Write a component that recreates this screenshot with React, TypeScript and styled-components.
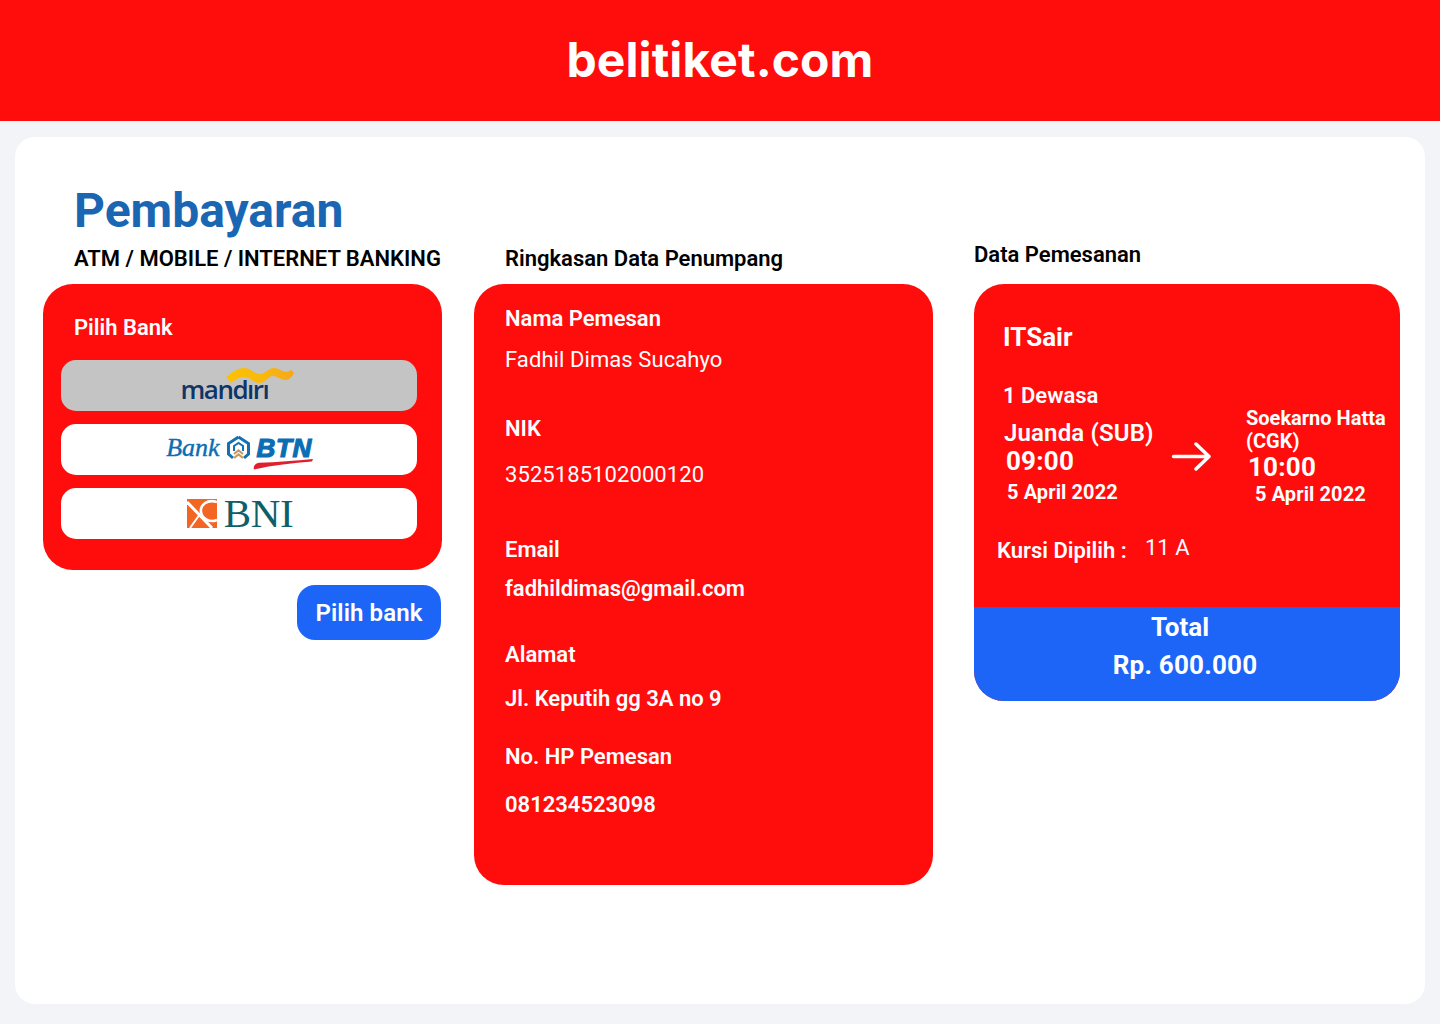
import React from 'react';
import styled, { createGlobalStyle } from 'styled-components';

const GlobalStyle = createGlobalStyle`
  html, body {
    margin: 0;
    padding: 0;
    background: #f2f4f7;
    font-family: Roboto, "Liberation Sans", sans-serif;
  }
  * { box-sizing: border-box; }
`;

const RED = '#ff0d0d';

const Page = styled.div`
  width: 1440px;
  height: 1024px;
  display: flex;
  flex-direction: column;
  overflow: hidden;
`;

const Header = styled.header`
  height: 121px;
  flex: none;
  padding-bottom: 2px;
  background: ${RED};
  display: flex;
  align-items: center;
  justify-content: center;
`;

const Brand = styled.h1`
  margin: 0;
  font-family: Inter, sans-serif;
  font-size: 48px;
  font-weight: 700;
  line-height: 58px;
  letter-spacing: 0.08px;
  color: #fff;
`;

const Sheet = styled.main`
  margin: 16px 15px 20px;
  flex: 1;
  background: #fff;
  border-radius: 20px;
  padding: 44px 25px 0 28px;
`;

const Title = styled.h2`
  margin: 0 0 0 31px;
  font-size: 48px;
  font-weight: 700;
  line-height: 60px;
  color: #1a66b3;
`;

const Columns = styled.div`
  display: grid;
  grid-template-columns: 399px 459px 1fr;
  column-gap: 32px;
  align-items: start;
`;

const Column = styled.section<{ $inset?: number }>`
  display: flex;
  flex-direction: column;
  padding-left: ${(p) => p.$inset ?? 0}px;
`;

const Heading = styled.h3<{ $indent?: number; $up?: number; $below: number }>`
  margin: ${(p) => 4 - (p.$up ?? 0)}px 0 ${(p) => p.$below}px ${(p) => p.$indent ?? 0}px;
  font-size: 22px;
  font-weight: 600;
  line-height: 28px;
  color: #000;
  white-space: nowrap;
`;

const BankCard = styled.div`
  height: 286px;
  background: ${RED};
  border-radius: 30px;
  padding: 30px 25px 0 18px;
`;

const BankTitle = styled.div`
  margin: 0 0 19px 13px;
  font-size: 22px;
  font-weight: 600;
  line-height: 27px;
  color: #fff;
`;

const BankList = styled.div`
  display: flex;
  flex-direction: column;
  gap: 13px;
`;

const BankOption = styled.button<{ $selected?: boolean }>`
  height: 51px;
  width: 356px;
  border: 0;
  padding: 0;
  border-radius: 15px;
  background: ${(p) => (p.$selected ? '#c4c4c4' : '#fff')};
  display: flex;
  align-items: center;
  justify-content: center;
  cursor: pointer;
`;

const Mandiri = styled.span`
  display: inline-flex;
  flex-direction: column;
  align-items: flex-end;
  width: 113px;
  margin: -3px 4px 0 0;
`;

const MandiriWord = styled.span`
  align-self: flex-start;
  margin-top: -6px;
  font-family: "Open Sans", sans-serif;
  font-size: 26px;
  font-weight: 600;
  line-height: 24px;
  letter-spacing: -1.5px;
  color: #0f3468;
`;

const Btn = styled.span`
  display: inline-flex;
  align-items: center;
  gap: 7px;
  margin: -4px 0 0 0;
`;

const BtnBank = styled.span`
  font-family: "Liberation Serif", serif;
  font-style: italic;
  font-size: 26px;
  line-height: 28px;
  color: #0b6eb4;
  -webkit-text-stroke: 0.4px #0b6eb4;
`;

const BtnWordmark = styled.span`
  position: relative;
  display: block;
  font-family: "Liberation Sans", sans-serif;
  font-style: italic;
  font-weight: 700;
  font-size: 26px;
  line-height: 26px;
  letter-spacing: 0.6px;
  color: #0b6eb4;
  -webkit-text-stroke: 1.2px #0b6eb4;
`;

const BtnSwoosh = styled.svg`
  position: absolute;
  left: -4px;
  bottom: -9px;
`;

const Bni = styled.span`
  display: inline-flex;
  align-items: center;
  gap: 7px;
  margin-left: 2px;
`;

const BniWord = styled.span`
  font-family: "Liberation Serif", serif;
  font-size: 41px;
  line-height: 38px;
  letter-spacing: -0.3px;
  margin-top: -2px;
  color: #0e6068;
`;

const ChooseRow = styled.div`
  display: flex;
  justify-content: flex-end;
  margin: 15px 1px 0 0;
`;

const ChooseButton = styled.button`
  width: 144px;
  height: 55px;
  border: 0;
  border-radius: 18px;
  background: #1d65f7;
  color: #fff;
  font-family: inherit;
  font-size: 24px;
  font-weight: 600;
  letter-spacing: 0.1px;
  cursor: pointer;
`;

const PassengerCard = styled.div`
  height: 601px;
  background: ${RED};
  border-radius: 30px;
  padding: 22px 31px 0;
`;

const FieldLabel = styled.div<{ $top: number }>`
  margin-top: ${(p) => p.$top}px;
  font-size: 22px;
  font-weight: 600;
  line-height: 26px;
  color: #fff;
`;

const FieldValue = styled.div<{ $top: number; $bold?: boolean }>`
  margin-top: ${(p) => p.$top}px;
  font-size: 22px;
  font-weight: ${(p) => (p.$bold ? 600 : 450)};
  line-height: 26px;
  letter-spacing: ${(p) => (p.$bold ? 0 : 0.08)}px;
  color: #fff;
`;

const OrderCard = styled.div`
  height: 417px;
  border-radius: 30px;
  overflow: hidden;
  display: flex;
  flex-direction: column;
  background: ${RED};
`;

const OrderBody = styled.div`
  flex: 1;
  padding: 36px 0 0 29px;
  color: #fff;
`;

const Airline = styled.div`
  font-size: 26px;
  font-weight: 700;
  line-height: 34px;
`;

const Passengers = styled.div`
  margin-top: 29px;
  font-size: 22px;
  font-weight: 600;
  line-height: 26px;
`;

const Route = styled.div`
  display: flex;
  align-items: flex-start;
`;

const Stop = styled.div<{ $width: number; $top: number }>`
  width: ${(p) => p.$width}px;
  margin-top: ${(p) => p.$top}px;
`;

const Place = styled.div<{ $small?: boolean; $indent?: number }>`
  margin-left: ${(p) => p.$indent ?? 0}px;
  font-size: ${(p) => (p.$small ? 20 : 24)}px;
  font-weight: ${(p) => (p.$small ? 700 : 600)};
  line-height: ${(p) => (p.$small ? 23 : 28)}px;
  letter-spacing: ${(p) => (p.$small ? 0 : 0.15)}px;
`;

const Time = styled.div<{ $indent: number }>`
  margin: -1px 0 0 ${(p) => p.$indent}px;
  font-size: 26px;
  font-weight: 700;
  line-height: 30px;
  letter-spacing: 0.2px;
`;

const FlightDate = styled.div<{ $indent: number; $top: number }>`
  margin: ${(p) => p.$top}px 0 0 ${(p) => p.$indent}px;
  font-size: 20px;
  font-weight: 700;
  line-height: 26px;
  letter-spacing: 0.1px;
  white-space: nowrap;
`;

const Arrow = styled.svg`
  flex: none;
  margin: 33px 32px 0 0;
`;

const Seat = styled.div`
  display: flex;
  align-items: flex-start;
  margin: 28px 0 0 -6px;
`;

const SeatLabel = styled.div`
  width: 148px;
  font-size: 22px;
  font-weight: 600;
  line-height: 26px;
  margin-top: 3px;
`;

const SeatValue = styled.div`
  font-size: 22px;
  font-weight: 450;
  line-height: 26px;
`;

const TotalBar = styled.div`
  height: 94px;
  flex: none;
  background: #1d65f7;
  color: #fff;
  text-align: center;
  padding-right: 4px;
`;

const TotalLabel = styled.div`
  margin: 5px 0 0 -10px;
  font-size: 26px;
  font-weight: 700;
  line-height: 30px;
`;

const TotalValue = styled.div`
  margin-top: 8px;
  font-size: 26px;
  font-weight: 700;
  line-height: 30px;
  letter-spacing: 0.2px;
`;

const fields = [
  { label: 'Nama Pemesan', value: 'Fadhil Dimas Sucahyo', labelTop: 0, valueTop: 15 },
  { label: 'NIK', value: '3525185102000120', labelTop: 43, valueTop: 20 },
  { label: 'Email', value: 'fadhildimas@gmail.com', labelTop: 49, valueTop: 13, bold: true },
  { label: 'Alamat', value: 'Jl. Keputih gg 3A no 9', labelTop: 40, valueTop: 18, bold: true },
  { label: 'No. HP Pemesan', value: '081234523098', labelTop: 32, valueTop: 22, bold: true },
];

function MandiriLogo() {
  return (
    <Mandiri>
      <svg width="68" height="15" viewBox="0 0 68 15">
        <defs>
          <linearGradient id="mandiriWave" x1="0" x2="1" y1="0" y2="0">
            <stop offset="0" stopColor="#fdc100" />
            <stop offset="0.55" stopColor="#f9b80e" />
            <stop offset="1" stopColor="#f6a71a" />
          </linearGradient>
        </defs>
        <path
          d="M0 9C6 4 12 0 18 0C25 0 28 6 34 6C39 6 42 0 48 0C53 0 56 4 61 4L65 2L68 5C66 9 63 12 60 12C54 12 52 8 47 8C42 8 40 15 33 15C27 15 24 9 18 9C13 9 9 12 5 15Z"
          fill="url(#mandiriWave)"
        />
      </svg>
      <MandiriWord>mandırı</MandiriWord>
    </Mandiri>
  );
}

function BtnLogo() {
  return (
    <Btn>
      <BtnBank>Bank</BtnBank>
      <svg width="23" height="26" viewBox="0 0 23 26" fill="none">
        <path d="M11.5 2 21.500 8.500V19L17 23M11.5 2 1.500 8.500V19L6 23" stroke="#1470b0" strokeWidth="3" />
        <path d="M7 16V11L11.5 8 16 11V16" stroke="#1470b0" strokeWidth="2" />
        <path d="M7 19 11.5 15.500 16 19M7 23 11.5 19.500 16 23" stroke="#c79a5b" strokeWidth="2.200" />
      </svg>
      <BtnWordmark>
        BTN
        <BtnSwoosh width="60" height="11" viewBox="0 0 60 11">
          <path d="M60 0 59 2.500C40 4 20 6 1 10.500 0 8 2 4 6 3.800 24 3 42 2 60 0z" fill="#e0202f" />
        </BtnSwoosh>
      </BtnWordmark>
    </Btn>
  );
}

function BniLogo() {
  return (
    <Bni>
      <svg width="30" height="29" viewBox="0 0 30 29">
        <rect width="30" height="29" fill="#f26522" />
        <path d="M0 3 25 29" fill="none" stroke="#fff" strokeWidth="3" />
        <path d="M13 15 3 29" fill="none" stroke="#fff" strokeWidth="2" />
        <path d="M30 3C20 0 13 6 14 13 15 20 23 24 30 21" fill="none" stroke="#fff" strokeWidth="2.600" />
      </svg>
      <BniWord>BNI</BniWord>
    </Bni>
  );
}

export default function App() {
  return (
    <Page>
      <GlobalStyle />
      <Header>
        <Brand>belitiket.com</Brand>
      </Header>
      <Sheet>
        <Title>Pembayaran</Title>
        <Columns>
          <Column>
            <Heading $indent={31} $below={11}>ATM / MOBILE / INTERNET BANKING</Heading>
            <BankCard>
              <BankTitle>Pilih Bank</BankTitle>
              <BankList>
                <BankOption $selected aria-label="Mandiri"><MandiriLogo /></BankOption>
                <BankOption aria-label="BTN"><BtnLogo /></BankOption>
                <BankOption aria-label="BNI"><BniLogo /></BankOption>
              </BankList>
            </BankCard>
            <ChooseRow>
              <ChooseButton>Pilih bank</ChooseButton>
            </ChooseRow>
          </Column>

          <Column>
            <Heading $indent={31} $below={11}>Ringkasan Data Penumpang</Heading>
            <PassengerCard>
              {fields.map((f) => (
                <div key={f.label}>
                  <FieldLabel $top={f.labelTop}>{f.label}</FieldLabel>
                  <FieldValue $top={f.valueTop} $bold={f.bold}>{f.value}</FieldValue>
                </div>
              ))}
            </PassengerCard>
          </Column>

          <Column $inset={9}>
            <Heading $up={4} $below={15}>Data Pemesanan</Heading>
            <OrderCard>
              <OrderBody>
                <Airline>ITSair</Airline>
                <Passengers>1 Dewasa</Passengers>
                <Route>
                  <Stop $width={168} $top={10}>
                    <Place $indent={1}>Juanda (SUB)</Place>
                    <Time $indent={3}>09:00</Time>
                    <FlightDate $indent={4} $top={3}>5 April 2022</FlightDate>
                  </Stop>
                  <Arrow width="42" height="29" viewBox="0 0 42 29" fill="none" stroke="#fff" strokeWidth="3.500" strokeLinecap="round" strokeLinejoin="round">
                    <path d="M2.500 14.500H38M25 2 38 14.500 25 27" />
                  </Arrow>
                  <Stop $width={150} $top={-2}>
                    <Place $small $indent={1}>Soekarno Hatta (CGK)</Place>
                    <Time $indent={3}>10:00</Time>
                    <FlightDate $indent={10} $top={-1}>5 April 2022</FlightDate>
                  </Stop>
                </Route>
                <Seat>
                  <SeatLabel>Kursi Dipilih :</SeatLabel>
                  <SeatValue>11 A</SeatValue>
                </Seat>
              </OrderBody>
              <TotalBar>
                <TotalLabel>Total</TotalLabel>
                <TotalValue>Rp. 600.000</TotalValue>
              </TotalBar>
            </OrderCard>
          </Column>
        </Columns>
      </Sheet>
    </Page>
  );
}
